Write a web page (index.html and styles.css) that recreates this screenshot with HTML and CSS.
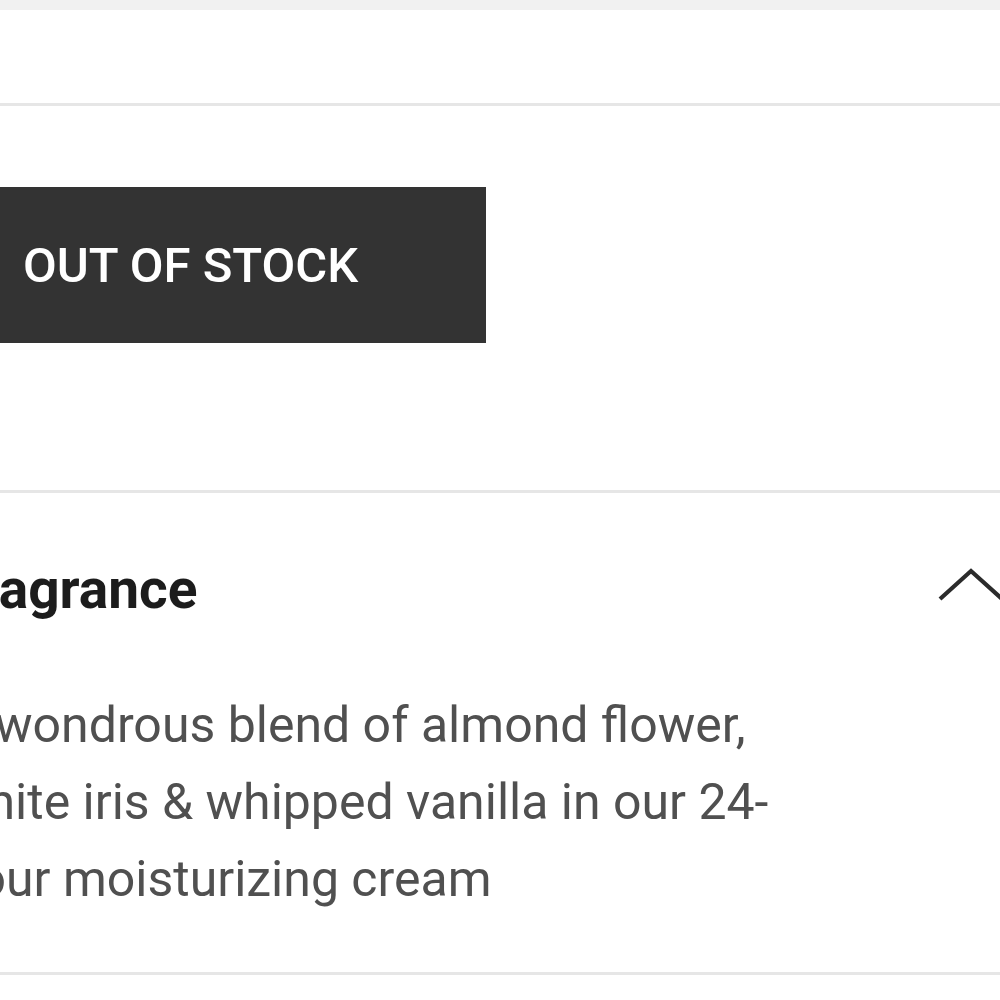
FILE: index.html
```html
<!DOCTYPE html>
<html lang="en">
<head>
  <meta charset="UTF-8">
  <title>Product - Fragrance</title>
  <link rel="stylesheet" href="styles.css">
</head>
<body>

<div class="top-band"></div>

<div class="page">
  <div class="qty-row"></div>

  <div class="buy-box">
    <button class="stock-btn" disabled>OUT OF STOCK</button>
  </div>

  <div class="accordion">
    <div class="acc-head">
      <h3>Fragrance</h3>
      <svg class="chevron" width="66" height="36" viewBox="0 0 66 36">
        <polyline points="2,32 33,4 64,32" fill="none" stroke="#2b2b2b" stroke-width="4.2"/>
      </svg>
    </div>
    <p class="acc-body">A wondrous blend of almond flower, white iris &amp; whipped vanilla in our 24-hour moisturizing cream</p>
  </div>
</div>

</body>
</html>
```

FILE: styles.css
```css
html, body {
  margin: 0;
  padding: 0;
  background: #fff;
  overflow: hidden;
  font-family: Roboto, "Liberation Sans", sans-serif;
}
.top-band {
  height: 10px;
  background: #f1f1f1;
}
.page {
  margin-left: -50px;
  width: 1054px;
}
.qty-row {
  height: 93px;
  border-bottom: 3px solid #e6e6e6;
}
.buy-box {
  padding: 81px 0 147px;
  border-bottom: 3px solid #e6e6e6;
}
.stock-btn {
  display: block;
  width: 536px;
  height: 156px;
  padding: 0 0 0 73px;
  border: none;
  background: #333;
  color: #fff;
  font-family: inherit;
  font-size: 49px;
  font-weight: 500;
  text-align: left;
}
.accordion {
  padding: 64px 0 54px;
  border-bottom: 3px solid #e6e6e6;
}
.acc-head {
  display: flex;
  justify-content: space-between;
  align-items: center;
}
.acc-head h3 {
  margin: 0;
  font-size: 55px;
  line-height: 64px;
  font-weight: 700;
  color: #1c1c1c;
}
.chevron {
  margin-top: -8px;
}
.acc-body {
  margin: 66px 0 0;
  width: 868px;
  font-size: 50px;
  line-height: 77px;
  color: #505050;
}
```
